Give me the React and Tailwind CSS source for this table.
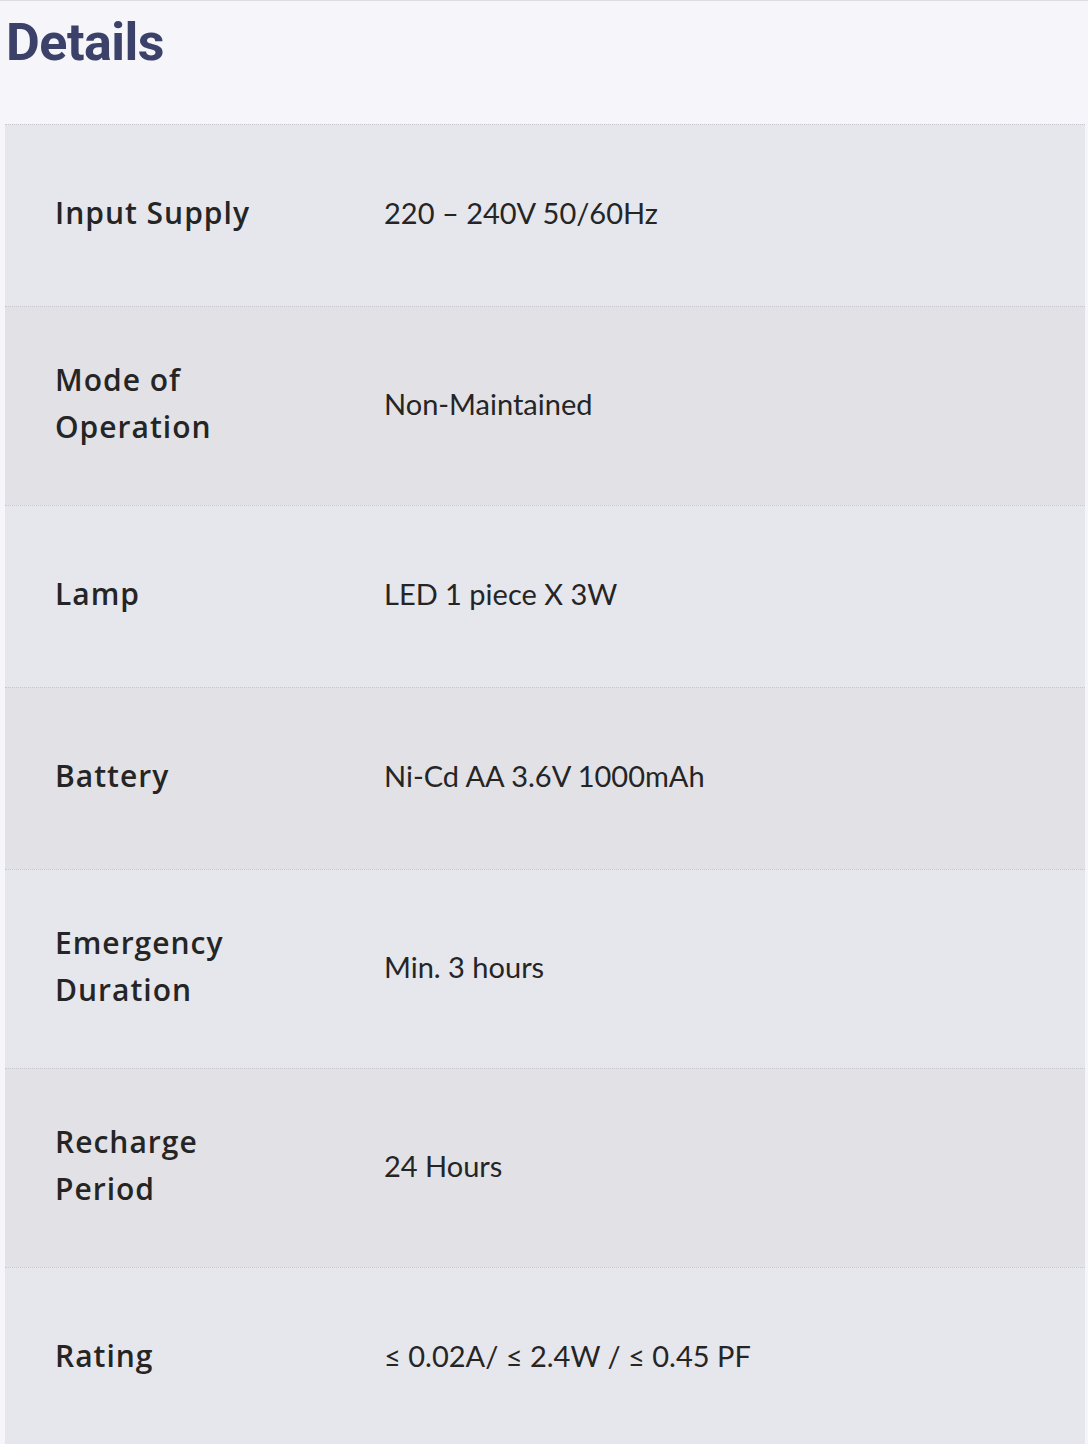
const rows = [
	{ label: "Input Supply", value: "220 – 240V 50/60Hz" },
	{ label: "Mode of Operation", value: "Non-Maintained" },
	{ label: "Lamp", value: "LED 1 piece X 3W" },
	{ label: "Battery", value: "Ni-Cd AA 3.6V 1000mAh" },
	{ label: "Emergency Duration", value: "Min. 3 hours" },
	{ label: "Recharge Period", value: "24 Hours" },
	{ label: "Rating", value: "≤ 0.02A/ ≤ 2.4W / ≤ 0.45 PF" },
];

const App = () => {
	return (
		<div className="min-h-screen bg-[#f5f5fa] border-t border-[#dcdce1] pl-[5px] pr-[3px] overflow-hidden">
			<h1 className="font-['Roboto',sans-serif] font-bold text-[52px] leading-[84px] tracking-[-0.5px] text-[#3b4169] pl-[1px] pb-[39px]">
				Details
			</h1>
			<div className="w-full">
				{rows.map((row, i) => (
					<div
						key={row.label}
						className={`grid grid-cols-[329px_1fr] items-center min-h-[182px] border-t border-dotted border-[#c8c8ce] ${i % 2 === 0 ? "bg-[#e6e6ed]" : "bg-[#e1e1e6]"}`}
					>
						<div className="pl-[50px] pr-[40px] pt-[49px] pb-[55px] font-['Open_Sans',sans-serif] font-semibold text-[30px] leading-[47px] tracking-[1px] text-[#252525]">
							{row.label}
						</div>
						<div className="px-[50px] pb-[6px] font-['Lato',sans-serif] text-[29px] leading-[47px] text-[#252525]">
							{row.value}
						</div>
					</div>
				))}
			</div>
		</div>
	);
};

export default App;
